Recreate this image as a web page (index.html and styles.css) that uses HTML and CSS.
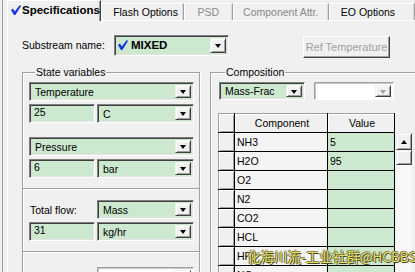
FILE: index.html
```html
<!DOCTYPE html>
<html lang="en">
<head>
    <meta charset="UTF-8" />
    <title>Specifications</title>
    <link rel="stylesheet" href="styles.css">
</head>

<body>
    <div class="win">
        <div class="tabs">
            <div class="tab active tab-spec">
                <svg class="chk" viewBox="0 0 10 10" width="10" height="10"><polygon points="0,5 2,3.6 3.8,6.6 8.8,0 10,1 4.3,10 3,10" /></svg>
                Specifications
            </div>
            <div class="tab tab-flash">Flash Options</div>
            <div class="tab tab-psd off">PSD</div>
            <div class="tab tab-attr off">Component Attr.</div>
            <div class="tab tab-eo">EO Options</div>
        </div>

        <div class="page">
            <div class="top-row">
                <span class="lbl sub-lbl">Substream name:</span>
                <div class="combo sub-combo">
                    <span class="val">
                        <svg class="chk" viewBox="0 0 10 10" width="10" height="10"><polygon points="0,5 2,3.6 3.8,6.6 8.8,0 10,1 4.3,10 3,10" /></svg>
                        <b>MIXED</b>
                    </span>
                    <span class="drop"><i></i></span>
                </div>
                <button class="ref" disabled>Ref Temperature</button>
            </div>

            <div class="cols">
                <fieldset class="grp state">
                    <legend>State variables</legend>
                    <div class="combo full"><span class="val">Temperature</span><span class="drop"><i></i></span></div>
                    <div class="pair">
                        <div class="edit">25</div>
                        <div class="combo unit"><span class="val">C</span><span class="drop"><i></i></span></div>
                    </div>

                    <div class="combo full gap-top"><span class="val">Pressure</span><span class="drop"><i></i></span></div>
                    <div class="pair">
                        <div class="edit">6</div>
                        <div class="combo unit"><span class="val">bar</span><span class="drop"><i></i></span></div>
                    </div>

                    <div class="sep"></div>

                    <div class="pair flow">
                        <span class="lbl flow-lbl">Total flow:</span>
                        <div class="combo unit"><span class="val">Mass</span><span class="drop"><i></i></span></div>
                    </div>
                    <div class="pair">
                        <div class="edit">31</div>
                        <div class="combo unit"><span class="val">kg/hr</span><span class="drop"><i></i></span></div>
                    </div>

                    <div class="sep"></div>

                    <div class="pair solvent">
                        <span class="lbl flow-lbl dim">Solvent:</span>
                        <div class="combo unit blank"><span class="val"></span><span class="drop"><i></i></span></div>
                    </div>
                </fieldset>

                <fieldset class="grp comp">
                    <legend>Composition</legend>
                    <div class="comp-row">
                        <div class="combo frac"><span class="val">Mass-Frac</span><span class="drop"><i></i></span></div>
                        <div class="combo blank basis"><span class="val"></span><span class="drop"><i></i></span></div>
                    </div>

                    <div class="grid-wrap">
                        <table class="grid">
                            <tr><th class="rh"></th><th class="c">Component</th><th class="v">Value</th></tr>
                            <tr><td class="rh"></td><td class="c">NH3</td><td class="v">5</td></tr>
                            <tr><td class="rh"></td><td class="c">H2O</td><td class="v">95</td></tr>
                            <tr><td class="rh"></td><td class="c">O2</td><td class="v"></td></tr>
                            <tr><td class="rh"></td><td class="c">N2</td><td class="v"></td></tr>
                            <tr><td class="rh"></td><td class="c">CO2</td><td class="v"></td></tr>
                            <tr><td class="rh"></td><td class="c">HCL</td><td class="v"></td></tr>
                            <tr><td class="rh"></td><td class="c">HF</td><td class="v"></td></tr>
                            <tr><td class="rh"></td><td class="c">NO</td><td class="v"></td></tr>
                        </table>
                        <div class="sbar">
                            <div class="sb-btn"><i></i></div>
                            <div class="sb-thumb"></div>
                            <div class="sb-track"></div>
                        </div>
                        <div class="mark">化海川流-工业社群@HCBBS</div>
                    </div>
                </fieldset>
            </div>
        </div>
    </div>
</body>

</html>
```

FILE: styles.css
```css
* {
    box-sizing: border-box;
}

html,
body {
    margin: 0;
    width: 415px;
    height: 272px;
    overflow: hidden;
    background: #f0f0f0;
    font-family: 'Liberation Sans', Arial, sans-serif;
    font-size: 10.5px;
    color: #000;
}

body {
    padding-left: 2px;
}

.win {
    height: 100%;
    border-left: 1px solid #a0a0a0;
    padding-left: 4px;
    display: flex;
    flex-direction: column;
}

/* tab strip */
.tabs {
    display: flex;
    align-items: flex-end;
    height: 23px;
    white-space: nowrap;
}

.tab {
    height: 17px;
    display: flex;
    align-items: center;
    justify-content: center;
    border-top: 1px solid #fff;
    border-left: 1px solid #fff;
    border-right: 1px solid #a0a0a0;
    box-shadow: inset -1px 0 #d8d8d8;
}

.tab.off {
    color: #8a8a8a;
}

.tab.active {
    height: 21px;
    margin-bottom: -1px;
    position: relative;
    z-index: 1;
    background: #f0f0f0;
    font-weight: 700;
    font-size: 11.5px;
    justify-content: flex-start;
    padding-left: 3px;
    border-right: 1px solid #404040;
    box-shadow: inset -1px 0 #a0a0a0;
    padding-bottom: 2px;
}

.tab-spec { width: 96px; }
.tab-flash { width: 87px; padding-left: 6px; }
.tab-psd { width: 51px; }
.tab-attr { width: 101px; }
.tab-eo { width: 90px; justify-content: flex-start; padding-left: 11px; }

.chk {
    fill: #1430e0;
    margin-right: 1px;
    flex: none;
}

.page {
    flex: 1;
    border-top: 1px solid #fff;
    border-left: 1px solid #fff;
    padding: 13px 0 0 14px;
}

.top-row {
    display: flex;
    align-items: center;
    height: 22px;
}

.sub-lbl {
    width: 92px;
}

/* combo boxes */
.combo {
    height: 19px;
    display: flex;
    align-items: stretch;
    background: #cce8cf;
    border: 1px solid;
    border-color: #808080 #fff #fff #808080;
    box-shadow: inset 1px 1px #404040, inset -1px -1px #e3e3e3;
    padding: 2px;
}

.combo .val {
    flex: 1;
    display: flex;
    align-items: center;
    padding-left: 3px;
    white-space: nowrap;
    overflow: hidden;
}

.drop {
    width: 16px;
    flex: none;
    display: flex;
    align-items: center;
    justify-content: center;
    background: #f0f0f0;
    border: 1px solid;
    border-color: #f0f0f0 #404040 #404040 #f0f0f0;
    box-shadow: inset 1px 1px #fff, inset -1px -1px #a0a0a0;
}

.drop i {
    width: 0;
    height: 0;
    border-left: 3.5px solid transparent;
    border-right: 3.5px solid transparent;
    border-top: 4px solid #000;
    margin-top: 1px;
}

.combo.blank {
    background: #fff;
    border-color: #a0a0a0 #fff #fff #a0a0a0;
    box-shadow: inset 1px 1px #c8c8c8;
}

.combo.blank .drop i {
    border-top-color: #a0a0a0;
}

.sub-combo {
    width: 115px;
    height: 21px;
}

.sub-combo b {
    font-size: 11.5px;
    margin-left: 2px;
}

.sub-combo .val {
    padding-left: 1px;
}

.ref {
    margin-left: 74px;
    margin-top: 3px;
    width: 87px;
    height: 22px;
    font: inherit;
    font-size: 11px;
    color: #a0a0a0;
    background: #f0f0f0;
    border: 1px solid;
    border-color: #fff #404040 #404040 #fff;
    box-shadow: inset -1px -1px #a0a0a0;
    padding: 0;
}

/* group boxes */
.cols {
    display: flex;
    gap: 10px;
    margin-top: 10px;
}

.grp {
    margin: 0;
    border: 1px solid #a0a0a0;
    box-shadow: inset 1px 1px #fff, 1px 1px #fff;
    min-width: 0;
}

.grp legend {
    padding: 0 1px;
    margin-left: 6px;
    line-height: 12px;
}

.state {
    width: 178px;
    flex: none;
    padding: 4px 5px 0 6px;
}

.full {
    width: 165px;
}

.pair {
    display: flex;
    align-items: center;
    gap: 2px;
    margin-top: 3px;
}

.edit {
    width: 66px;
    height: 19px;
    background: #cce8cf;
    border: 1px solid;
    border-color: #808080 #fff #fff #808080;
    box-shadow: inset 1px 1px #404040, inset -1px -1px #e3e3e3;
    padding: 1px 0 0 4px;
}

.unit {
    width: 97px;
}

.gap-top {
    margin-top: 14px;
}

.sep {
    height: 2px;
    margin: 10px -5px 0 -6px;
    border-top: 1px solid #a0a0a0;
    border-bottom: 1px solid #fff;
}

.flow {
    margin-top: 10px;
}

.flow-lbl {
    width: 66px;
    padding-left: 1px;
}

.dim {
    color: #a0a0a0;
}

.solvent {
    margin-top: 14px;
}

.comp {
    width: 220px;
    flex: none;
    padding: 4px 0 0 8px;
}

.comp-row {
    display: flex;
    gap: 9px;
}

.frac {
    width: 86px;
    height: 18px;
}

.basis {
    width: 80px;
    height: 18px;
}

/* composition grid */
.grid-wrap {
    display: flex;
    align-items: flex-start;
    margin: 13px 0 0 -1px;
    position: relative;
}

.grid {
    border-collapse: collapse;
    table-layout: fixed;
}

.grid th,
.grid td {
    height: 19px;
    padding: 0 0 0 2px;
    border: 1px solid #000;
    white-space: nowrap;
    font-weight: 400;
    text-align: left;
}

.grid th {
    background: #f0f0f0;
    text-align: center;
    border-color: #a0a0a0 #000 #000 #a0a0a0;
    box-shadow: inset 1px 1px #fff;
}

.grid .rh {
    width: 16px;
    background: #f0f0f0;
    border-left-color: #a0a0a0;
    box-shadow: inset 1px 1px #fff, inset -1px -1px #a0a0a0;
}

.grid .c {
    width: 93px;
}

.grid td.c {
    background: #f4f4f4;
}

.grid .v {
    width: 67px;
}

.grid td.v {
    background: #cce8cf;
}

.sbar {
    width: 16px;
    margin: 20px 0 0 1px;
    display: flex;
    flex-direction: column;
}

.sb-btn,
.sb-thumb {
    background: #f0f0f0;
    border: 1px solid;
    border-color: #f0f0f0 #404040 #404040 #f0f0f0;
    box-shadow: inset 1px 1px #fff, inset -1px -1px #a0a0a0;
}

.sb-btn {
    height: 17px;
    display: flex;
    align-items: center;
    justify-content: center;
}

.sb-btn i {
    width: 0;
    height: 0;
    border-left: 3.5px solid transparent;
    border-right: 3.5px solid transparent;
    border-bottom: 4px solid #000;
}

.sb-thumb {
    height: 15px;
}

.sb-track {
    height: 120px;
    background: #f7f7f7;
}

.mark {
    position: absolute;
    left: 29px;
    top: 135px;
    font-family: 'Noto Sans CJK SC', sans-serif;
    font-size: 13.5px;
    line-height: 16px;
    color: #e2de5a;
    text-shadow: 1px 1px 0 #4a4830, -1px 0 0 #6a6840, 0 -1px 0 #8a8860;
    white-space: nowrap;
}
```
